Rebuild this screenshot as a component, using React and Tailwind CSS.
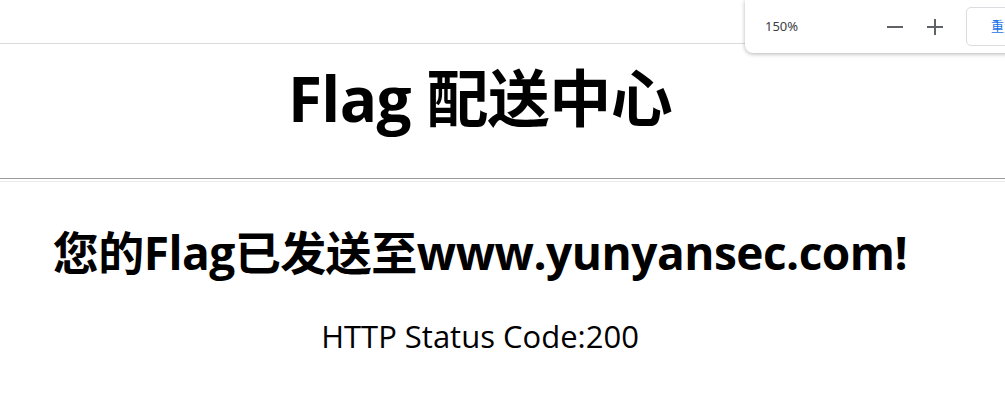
import React from 'react';

function ZoomPopup() {
    return (
        <div className="absolute top-0 left-[745px] w-[340px] h-[53px] bg-white rounded-bl-[8px] shadow-[0_1px_4px_rgba(0,0,0,0.3)] flex items-center font-['Noto_Sans','Noto_Sans_CJK_SC',sans-serif]">
            <span className="shrink-0 ml-[20px] w-[120px] text-[13px] text-[#3c4043]">150%</span>
            {/* minus */}
            <button className="shrink-0 w-[20px] h-[20px] flex items-center justify-center">
                <span className="block w-[16px] h-[2px] bg-[#5f6368]" />
            </button>
            {/* plus */}
            <button className="shrink-0 ml-[20px] w-[20px] h-[20px] relative flex items-center justify-center">
                <span className="block w-[16px] h-[2px] bg-[#5f6368]" />
                <span className="absolute w-[2px] h-[16px] bg-[#5f6368]" />
            </button>
            <button className="shrink-0 ml-[21px] h-[39px] px-[24px] border border-[#dadce0] rounded-[5px] text-[13px] text-[#1a73e8] whitespace-nowrap">
                重置
            </button>
        </div>
    );
}

export default function App() {
    return (
        <div className="relative w-[1005px] h-[415px] bg-white overflow-hidden font-['Open_Sans','Noto_Sans_CJK_SC',sans-serif] text-black">
            {/* browser chrome strip */}
            <div className="h-[44px] border-b border-[#dadada]" />

            <div className="w-[960px] text-center">
                <h1 className="pt-[23px] h-[134px] text-[62px] tracking-[-0.6px] leading-none font-bold">
                    Flag 配送中心
                </h1>
            </div>

            <hr className="h-[4px] border-t border-b border-t-[#9a9a9a] border-b-[#ebebeb]" />

            <div className="w-[960px] text-center">
                <h2 className="mt-[47px] text-[46px] tracking-[-0.5px] leading-none font-bold">
                    您的Flag已发送至www.yunyansec.com!
                </h2>
                <p className="mt-[46px] text-[31px] leading-none">
                    HTTP Status Code:200
                </p>
            </div>

            <ZoomPopup />
        </div>
    );
}
